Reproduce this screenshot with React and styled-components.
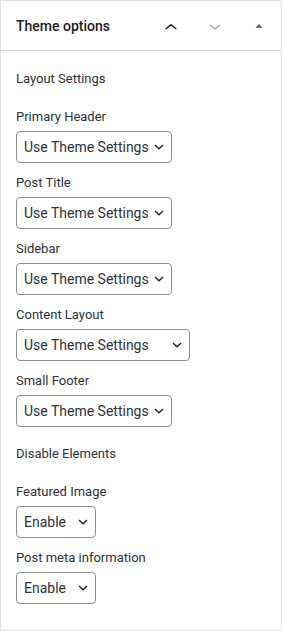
import React from "react";
import styled, { createGlobalStyle } from "styled-components";

const GlobalStyle = createGlobalStyle`
  html, body {
    margin: 0;
    padding: 0;
    background: #fff;
  }
  * {
    box-sizing: border-box;
  }
`;

const Panel = styled.div`
  width: 282px;
  height: 631px;
  border: 1px solid #e0e0e0;
  background: #fff;
  font-family: Roboto, "Noto Sans", sans-serif;
  color: #1e1e1e;
`;

const Header = styled.div`
  display: flex;
  align-items: center;
  height: 50px;
  border-bottom: 1px solid #dcdcde;
`;

const Title = styled.h2`
  flex: 1;
  margin: 0;
  padding-left: 15px;
  font-size: 14px;
  font-weight: 500;
  color: #1e1e1e;
`;

const IconButton = styled.div`
  width: 44px;
  height: 49px;
  display: flex;
  align-items: center;
  justify-content: center;
  color: ${(p) => p.$color || "#1e1e1e"};
`;

const Body = styled.div`
  padding: 18px 15px 16px;
  display: flex;
  flex-direction: column;
`;

const Heading = styled.div`
  font-size: 13px;
  line-height: 20px;
  color: #2c3338;
  margin-top: ${(p) => (p.$first ? "0" : "7px")};
  margin-bottom: 18px;
`;

const Field = styled.div`
  display: flex;
  flex-direction: column;
  align-items: flex-start;
  margin-bottom: 10px;
`;

const Label = styled.label`
  font-size: 13px;
  line-height: 20px;
  color: #2c3338;
  margin-bottom: 4px;
`;

const Select = styled.div`
  width: ${(p) => p.$width}px;
  height: 32px;
  border: 1px solid #8c8f94;
  border-radius: 4px;
  display: flex;
  align-items: center;
  justify-content: space-between;
  padding: 0 7px;
  font-size: 14px;
  color: #2c3338;
`;

const ChevronUp = () => (
  <svg width="24" height="24" viewBox="0 0 24 24" fill="currentColor">
    <path d="M6.2 14.4L12 9.8l5.8 4.6-.9 1.2L12 11.8l-4.8 3.8-1-1.2z" />
  </svg>
);

const ChevronDown = () => (
  <svg width="24" height="24" viewBox="0 0 24 24" fill="currentColor">
    <path d="M17.5 11.6L12 16l-5.5-4.4.9-1.2L12 14l4.6-3.6 1 1.2z" />
  </svg>
);

const Triangle = () => (
  <svg width="24" height="24" viewBox="0 0 24 24" fill="currentColor">
    <path d="M8.5 14L12 9.8l3.5 4.2z" />
  </svg>
);

const SmallChevron = () => (
  <svg width="10" height="6" viewBox="0 0 10 6" fill="none">
    <polyline points="1,1 5,4.8 9,1" stroke="#1e1e1e" strokeWidth="1.3" />
  </svg>
);

const layoutFields = [
  { label: "Primary Header", width: 156 },
  { label: "Post Title", width: 156 },
  { label: "Sidebar", width: 156 },
  { label: "Content Layout", width: 174 },
  { label: "Small Footer", width: 156 },
];

const disableFields = [
  { label: "Featured Image", width: 80 },
  { label: "Post meta information", width: 80 },
];

function SelectField({ label, value, width }) {
  return (
    <Field>
      <Label>{label}</Label>
      <Select $width={width}>
        <span>{value}</span>
        <SmallChevron />
      </Select>
    </Field>
  );
}

export default function App() {
  return (
    <>
      <GlobalStyle />
      <Panel>
        <Header>
          <Title>Theme options</Title>
          <IconButton>
            <ChevronUp />
          </IconButton>
          <IconButton $color="#a7aaad">
            <ChevronDown />
          </IconButton>
          <IconButton $color="#646970">
            <Triangle />
          </IconButton>
        </Header>
        <Body>
          <Heading $first>Layout Settings</Heading>
          {layoutFields.map((f) => (
            <SelectField
              key={f.label}
              label={f.label}
              value="Use Theme Settings"
              width={f.width}
            />
          ))}
          <Heading>Disable Elements</Heading>
          {disableFields.map((f) => (
            <SelectField
              key={f.label}
              label={f.label}
              value="Enable"
              width={f.width}
            />
          ))}
        </Body>
      </Panel>
    </>
  );
}
